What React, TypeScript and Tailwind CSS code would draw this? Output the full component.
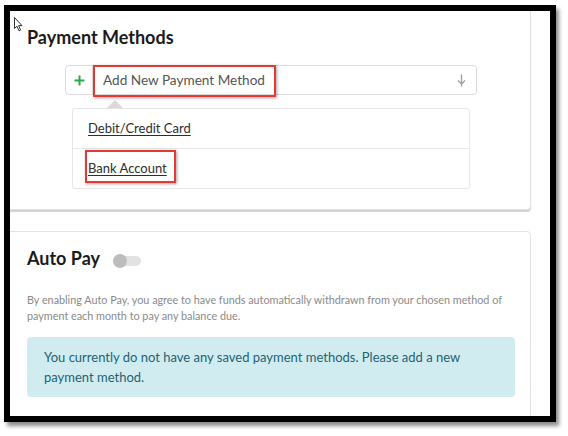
const font = { fontFamily: "Lato, 'Open Sans', Arial, sans-serif" };

const Cursor = () => (
  <svg width="10" height="15" viewBox="0 0 10 15" className="absolute left-[4px] top-[6px]">
    <path d="M0.5 0.5 L0.5 11.5 L3 9.2 L5 13.8 L6.6 13.1 L4.7 8.6 L8 8.6 Z" fill="#fff" stroke="#333" strokeWidth="1" strokeLinejoin="round" />
  </svg>
);

const Highlight = ({ className }: { className: string }) => (
  <span className={`pointer-events-none absolute border-2 border-[#e53935] shadow-[1px_1px_3px_rgba(0,0,0,0.35)] ${className}`} />
);

export default function App() {
  return (
    <div className="h-[436px] w-[568px] bg-white" style={font}>
      <div className="ml-[4px] pt-[5px]">
        <div className="h-[417px] w-[552px] border-[6px] border-black bg-white shadow-[3px_4px_4px_rgba(0,0,0,0.45)]">
          <div className="relative h-full w-full overflow-hidden">
            <Cursor />
            <div className="ml-[-10px] mt-[-10px] flex w-[531px] flex-col">
              {/* Payment Methods */}
              <div className="rounded-[4px] border border-[#e3e3e3] bg-white pb-[20px] pl-[26px] pr-[15px] pt-[23px] shadow-[0_2px_1px_rgba(0,0,0,0.18)]">
                <h2 className="text-[18px] font-bold leading-6 text-[#1b1b1b]">Payment Methods</h2>
                <div className="relative ml-[38px] mt-4 flex h-[30px] w-[412px] items-center rounded-[4px] border border-[#dcdcdc] bg-white">
                  <span className="flex h-full w-[27px] items-center justify-center border-r border-[#e3e3e3]">
                    <svg width="11" height="11" viewBox="0 0 11 11">
                      <path d="M5.5 0.5 V10.5 M0.5 5.5 H10.5" stroke="#2ea84a" strokeWidth="2" />
                    </svg>
                  </span>
                  <span className="relative flex h-full flex-1 items-center pl-[10px] text-[13.6px] text-[#555]">
                    Add New Payment Method
                    <Highlight className="-top-[1px] left-0 h-[32px] w-[183px]" />
                  </span>
                  <svg width="9" height="13" viewBox="0 0 9 13" className="mr-[10px]">
                    <path d="M4.5 0.5 V12.5 M1 6.5 L4.5 10 L8 6.5" fill="none" stroke="#9aa3a8" strokeWidth="1.4" />
                  </svg>
                </div>
                <div className="relative ml-[45px] mt-[13px] w-[398px] rounded-[3px] border border-[#e6e6e6] bg-white text-[13px] text-[#2d2d2d]">
                  <span className="absolute -top-[9px] left-[34px] h-0 w-0 border-x-[8px] border-b-[8px] border-x-transparent border-b-[#d9d9d9]" />
                  <div className="flex h-[40px] items-center border-b border-[#e9e9e9] pl-[15px]">
                    <span className="underline underline-offset-2">Debit/Credit Card</span>
                  </div>
                  <div className="relative flex h-[39px] items-center pl-[15px]">
                    <span className="underline underline-offset-2">Bank Account</span>
                    <Highlight className="left-[12px] top-[1px] h-[33px] w-[91px]" />
                  </div>
                </div>
              </div>

              {/* Auto Pay */}
              <div className="mt-[21px] rounded-[4px] border border-[#e3e3e3] bg-white pb-[30px] pl-[26px] pr-[15px] pt-[14px]">
                <div className="flex items-center">
                  <h2 className="text-[18px] font-bold leading-6 text-[#1b1b1b]">Auto Pay</h2>
                  <span className="relative ml-[13px] mt-[6px] flex h-[14px] w-[28px] items-center">
                    <span className="absolute left-[4px] right-0 h-[10px] rounded-full bg-[#e2e2e2]" />
                    <span className="relative h-[14px] w-[14px] rounded-full bg-[#bdbdbd]" />
                  </span>
                </div>
                <p className="mt-[22px] text-[10.8px] leading-4 text-[#8a8a8a]">
                  By enabling Auto Pay, you agree to have funds automatically withdrawn from your chosen method of payment each month to pay any balance due.
                </p>
                <div className="mt-[13px] rounded-[4px] bg-[#d1ecf1] px-[17px] py-[10px] text-[13px] leading-5 text-[#1e6373]">
                  You currently do not have any saved payment methods. Please add a new payment method.
                </div>
              </div>
            </div>
          </div>
        </div>
      </div>
    </div>
  );
}
